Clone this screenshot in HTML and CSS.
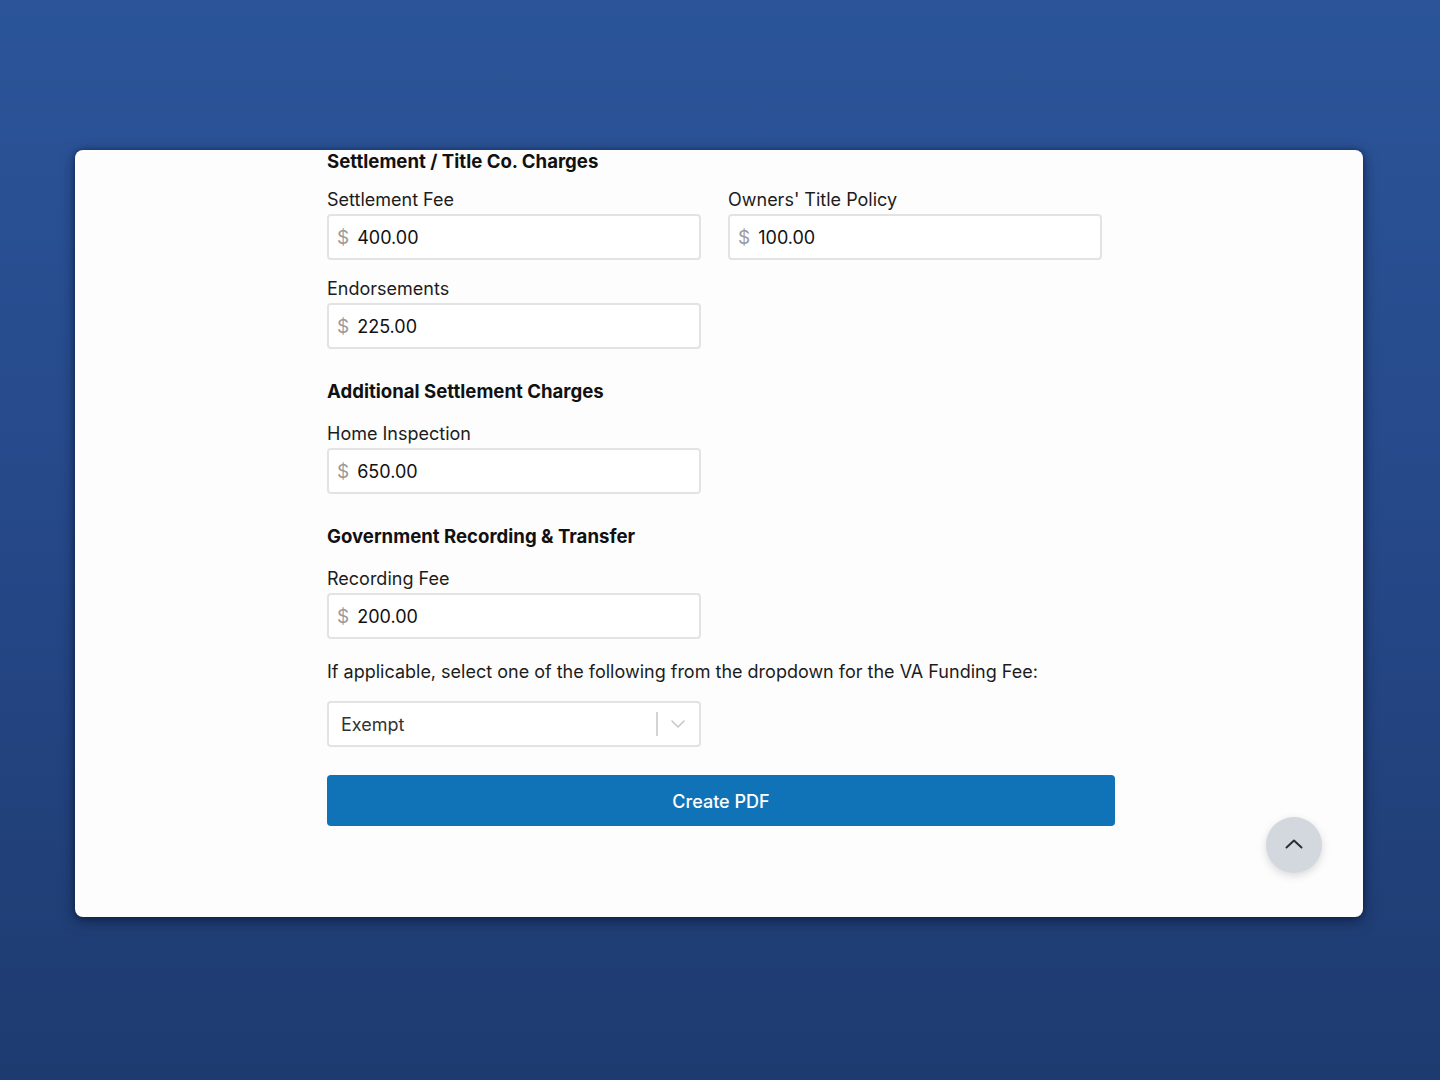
FILE: index.html
```html
<!DOCTYPE html>
<html lang="en">
<head>
<meta charset="utf-8">
<title>Settlement Charges</title>
<link rel="stylesheet" href="styles.css">
</head>
<body>
<div class="page">
  <div class="card">
    <div class="content">
      <h2 class="section first">Settlement / Title Co. Charges</h2>
      <div class="grid">
        <div class="field">
          <label class="label">Settlement Fee</label>
          <div class="input"><span class="cur">$</span><span class="val">400.00</span></div>
        </div>
        <div class="field">
          <label class="label">Owners' Title Policy</label>
          <div class="input"><span class="cur">$</span><span class="val">100.00</span></div>
        </div>
        <div class="field">
          <label class="label">Endorsements</label>
          <div class="input"><span class="cur">$</span><span class="val">225.00</span></div>
        </div>
      </div>

      <h2 class="section">Additional Settlement Charges</h2>
      <div class="grid">
        <div class="field">
          <label class="label">Home Inspection</label>
          <div class="input"><span class="cur">$</span><span class="val">650.00</span></div>
        </div>
      </div>

      <h2 class="section">Government Recording &amp; Transfer</h2>
      <div class="grid">
        <div class="field">
          <label class="label">Recording Fee</label>
          <div class="input"><span class="cur">$</span><span class="val">200.00</span></div>
        </div>
      </div>

      <p class="note">If applicable, select one of the following from the dropdown for the VA Funding Fee:</p>
      <div class="select">
        <span class="sel-val">Exempt</span>
        <span class="sel-ind">
          <span class="sep"></span>
          <svg class="chev" width="14" height="8" viewBox="0 0 14 8"><path d="M1 1l6 6 6-6" fill="none" stroke="#c8c8c8" stroke-width="1.6" stroke-linecap="round" stroke-linejoin="round"/></svg>
        </span>
      </div>
      <button class="btn">Create PDF</button>
    </div>
    <button class="totop" aria-label="Back to top">
      <svg width="18" height="10" viewBox="0 0 18 10"><path d="M1.5 8.5L9 1.5l7.5 7" fill="none" stroke="#2a2f36" stroke-width="2" stroke-linecap="round" stroke-linejoin="round"/></svg>
    </button>
  </div>
</div>
</body>
</html>
```

FILE: styles.css
```css
html, body {
  margin: 0;
  padding: 0;
}
body {
  width: 1440px;
  height: 1080px;
  background: linear-gradient(180deg, #2b5599 0%, #26498a 45%, #1e3b70 100%);
  font-family: Inter, "Liberation Sans", Arial, sans-serif;
  color: #1a1a1a;
  overflow: hidden;
}
.page {
  padding-top: 150px;
  padding-left: 75px;
}
.card {
  position: relative;
  width: 1288px;
  height: 767px;
  background: #fdfdfd;
  border-radius: 8px;
  box-shadow: 0 4px 14px rgba(5, 15, 40, 0.55), 0 0 4px rgba(5, 15, 40, 0.4);
  overflow: hidden;
}
.content {
  width: 788px;
  margin-left: 252px;
}
.section {
  margin: 30px 0 19px;
  font-size: 18.6px;
  line-height: 24px;
  font-weight: 700;
  color: #111;
}
.section.first {
  margin-top: 0;
  margin-bottom: 16px;
  line-height: 22px;
}
.grid {
  display: grid;
  grid-template-columns: 374px 374px;
  column-gap: 27px;
  row-gap: 17px;
}
.field {
  display: flex;
  flex-direction: column;
  gap: 2px;
}
.label {
  font-size: 18px;
  line-height: 24px;
  color: #1c1c1c;
}
.input {
  box-sizing: border-box;
  height: 46px;
  border: 2px solid #e3e3e3;
  border-radius: 4px;
  background: #fff;
  display: flex;
  align-items: center;
  padding-left: 8px;
  gap: 8px;
  font-size: 18px;
}
.cur {
  color: #9a9a9a;
  font-size: 19px;
}
.val {
  color: #111;
}
.note {
  margin: 21px 0 17px;
  font-size: 18px;
  line-height: 24px;
  color: #1c1c1c;
}
.select {
  box-sizing: border-box;
  width: 374px;
  height: 46px;
  border: 2px solid #e3e3e3;
  border-radius: 4px;
  background: #fff;
  display: flex;
  align-items: center;
  justify-content: space-between;
  padding-left: 12px;
  padding-right: 14px;
}
.sel-val {
  font-size: 18px;
  color: #333;
}
.sel-ind {
  display: flex;
  align-items: center;
  gap: 13px;
}
.sep {
  width: 2px;
  height: 24px;
  background: #d4d4d4;
}
.chev {
  display: block;
}
.btn {
  display: block;
  width: 788px;
  height: 51px;
  margin-top: 28px;
  border: none;
  border-radius: 4px;
  background: #1173b7;
  color: #fff;
  font-family: inherit;
  font-size: 18px;
  font-weight: 500;
  padding-top: 2px;
  cursor: pointer;
}
.totop {
  position: absolute;
  right: 41px;
  bottom: 44px;
  width: 56px;
  height: 56px;
  border: none;
  border-radius: 50%;
  background: #d3d7de;
  box-shadow: 0 3px 8px rgba(0, 0, 0, 0.15);
  display: flex;
  align-items: center;
  justify-content: center;
  padding: 0;
}
.totop svg {
  display: block;
  margin-top: -2px;
}
```
